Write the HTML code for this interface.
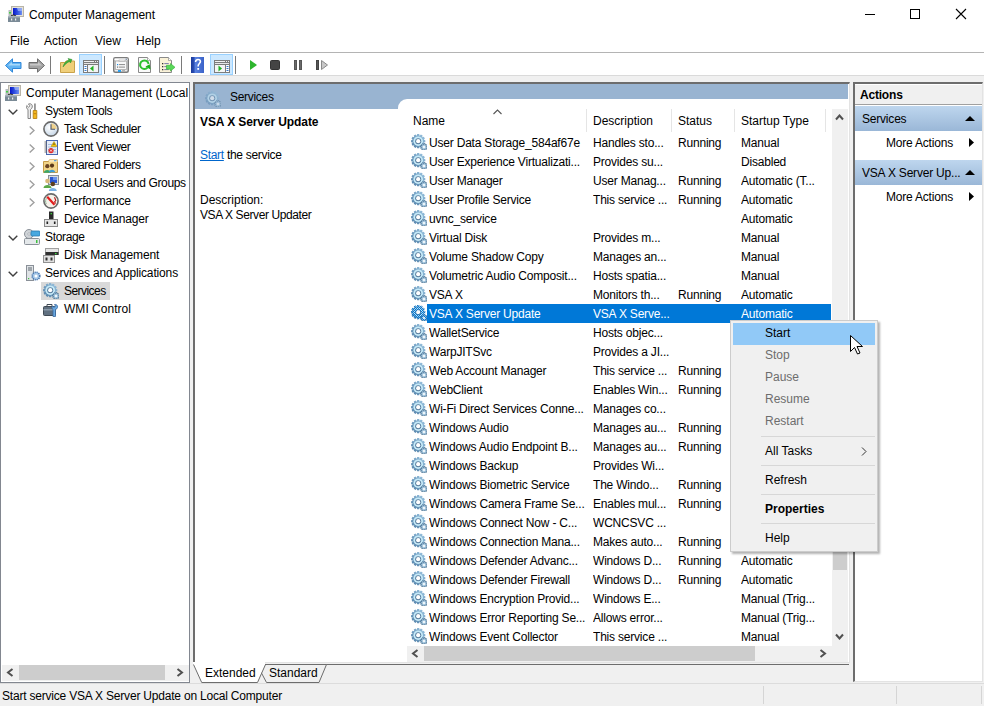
<!DOCTYPE html>
<html><head><meta charset="utf-8"><style>
*{margin:0;padding:0;box-sizing:border-box}
html,body{width:984px;height:706px;overflow:hidden;background:#f0f0f0;font-family:"Liberation Sans",sans-serif;font-size:12px;color:#000}
.a{position:absolute}
.t{position:absolute;white-space:nowrap;line-height:18px;font-size:12px}
#title{left:0;top:0;width:984px;height:52px;background:#fff}
#menuline{left:0;top:52px;width:984px;height:1px;background:#b4b4b4}
#toolbar{left:0;top:53px;width:984px;height:22px;background:#fff}
.sep{position:absolute;top:56px;width:1px;height:18px;background:#7a7a7a}
.tbh{position:absolute;top:54px;height:21px;background:#cce8ff;border:1px solid #99d1ff}
#tree{left:0;top:82px;width:190px;height:601px;background:#fff;border:1px solid #828790}
#center{left:193px;top:82px;width:657px;height:581px;background:#fff;border-top:2px solid #6d6d6d;border-left:2px solid #6d6d6d;border-right:1px solid #e3e3e3;border-bottom:1px solid #e3e3e3}
#hdrblue{left:195px;top:84px;width:653px;height:15px;background:#99b4d1}
#hdrblue2{left:195px;top:99px;width:203px;height:10px;background:#99b4d1}
#corner{left:397px;top:99px;width:10px;height:10px;background:#99b4d1}
#cornerw{left:398px;top:99px;width:20px;height:20px;background:#fff;border-top-left-radius:9px}
#actions{left:853px;top:82px;width:130px;height:600px;background:#fff;border-top:2px solid #6d6d6d;border-left:2px solid #6d6d6d;border-right:1px solid #e3e3e3;border-bottom:1px solid #e3e3e3}
#acttitle{left:855px;top:85px;width:127px;height:20px;background:#f0f0f0;border-bottom:1px solid #a0a0a0}
.agrad{position:absolute;left:855px;width:127px;height:25px;background:linear-gradient(#bed6ee,#9ab7d7)}
.row{position:absolute;left:408px;width:423px;height:19px}
.row .gi{position:absolute;left:3px;top:1px}
.row span{position:absolute;top:1px;line-height:18px;white-space:nowrap;overflow:hidden}
.row .c1{left:21px;width:170px}
.row .c2{left:185px;width:86px}
.row .c3{left:270px;width:60px}
.row .c4{left:333px;width:88px}
.row .hl{display:none}
.row.sel .hl{display:block;left:19px;top:0;width:404px;height:19px;background:#0078d7}
.row.sel span.c1,.row.sel span.c2,.row.sel span.c3,.row.sel span.c4{color:#fff}
#vscroll{left:832px;top:109px;width:16px;height:537px;background:#f0f0f0}
#vthumb{left:833px;top:520px;width:14px;height:50px;background:#cdcdcd}
#hscroll{left:407px;top:646px;width:425px;height:16px;background:#f0f0f0}
#hthumb{left:424px;top:646px;width:331px;height:15px;background:#cdcdcd}
#sbcorner{left:832px;top:646px;width:16px;height:16px;background:#f0f0f0}
#treehs{left:2px;top:665px;width:187px;height:16px;background:#f0f0f0}
#treehthumb{left:19px;top:665px;width:146px;height:15px;background:#cdcdcd}
#status{left:0;top:683px;width:984px;height:23px;background:#f0f0f0;border-top:1px solid #dcdcdc}
#menu{left:730px;top:320px;width:148px;height:232px;background:#f0f0f0;border:1px solid #cccccc;box-shadow:2px 2px 2px rgba(0,0,0,0.3)}
#mhl{left:733px;top:323px;width:142px;height:22px;background:#91c9f7}
.msep{position:absolute;left:761px;width:114px;height:1px;background:#d7d7d7}
.dis{color:#6d6d6d}
a.lk{color:#0066cc;text-decoration:underline}
.row span{letter-spacing:-0.2px}
.tr{letter-spacing:-0.2px}

</style></head><body>
<svg width="0" height="0" style="position:absolute">
 <defs>
  <linearGradient id="gg" x1="0" y1="0" x2="1" y2="1">
   <stop offset="0" stop-color="#dff0fb"/><stop offset="0.5" stop-color="#9cc3dc"/><stop offset="1" stop-color="#5a7e98"/>
  </linearGradient>
  <linearGradient id="gbody" x1="1" y1="0" x2="0" y2="1"><stop offset="0" stop-color="#9cc6e2"/><stop offset="1" stop-color="#4f7ea6"/></linearGradient>
  <symbol id="gear" viewBox="0 0 16 16">
   <path d="M12.73 5.82 L14.33 6.17 L14.33 8.23 L12.73 8.58 L12.68 8.77 L13.89 9.87 L12.85 11.66 L11.30 11.16 L11.16 11.30 L11.66 12.85 L9.87 13.89 L8.77 12.68 L8.58 12.73 L8.23 14.33 L6.17 14.33 L5.82 12.73 L5.63 12.68 L4.53 13.89 L2.74 12.85 L3.24 11.30 L3.10 11.16 L1.55 11.66 L0.51 9.87 L1.72 8.77 L1.67 8.58 L0.07 8.23 L0.07 6.17 L1.67 5.82 L1.72 5.63 L0.51 4.53 L1.55 2.74 L3.10 3.24 L3.24 3.10 L2.74 1.55 L4.53 0.51 L5.63 1.72 L5.82 1.67 L6.17 0.07 L8.23 0.07 L8.58 1.67 L8.77 1.72 L9.87 0.51 L11.66 1.55 L11.16 3.10 L11.30 3.24 L12.85 2.74 L13.89 4.53 L12.68 5.63z" fill="url(#gbody)"/>
   <circle cx="7.2" cy="7.2" r="4.8" fill="#c6eaf8"/>
   <circle cx="7.2" cy="7.2" r="3.0" fill="#557a9c"/>
   <circle cx="7.2" cy="7.2" r="2.1" fill="#fff"/>
   <path d="M15.47 12.59 L16.40 13.01 L16.14 14.31 L15.11 14.33 L15.03 14.46 L15.40 15.41 L14.29 16.15 L13.55 15.44 L13.41 15.47 L12.99 16.40 L11.69 16.14 L11.67 15.11 L11.54 15.03 L10.59 15.40 L9.85 14.29 L10.56 13.55 L10.53 13.41 L9.60 12.99 L9.86 11.69 L10.89 11.67 L10.97 11.54 L10.60 10.59 L11.71 9.85 L12.45 10.56 L12.59 10.53 L13.01 9.60 L14.31 9.86 L14.33 10.89 L14.46 10.97 L15.41 10.60 L16.15 11.71 L15.44 12.45z" fill="#a9cbe2" stroke="#3f6586" stroke-width="0.7"/>
   <circle cx="13" cy="13" r="1.1" fill="#fff"/>
  </symbol>
  <pattern id="dith" width="2" height="2" patternUnits="userSpaceOnUse"><rect width="1" height="1" fill="#0078d7"/><rect x="1" y="1" width="1" height="1" fill="#0078d7"/></pattern>
  <mask id="gmask" maskUnits="userSpaceOnUse" x="0" y="0" width="16" height="16"><path d="M12.73 5.82 L14.33 6.17 L14.33 8.23 L12.73 8.58 L12.68 8.77 L13.89 9.87 L12.85 11.66 L11.30 11.16 L11.16 11.30 L11.66 12.85 L9.87 13.89 L8.77 12.68 L8.58 12.73 L8.23 14.33 L6.17 14.33 L5.82 12.73 L5.63 12.68 L4.53 13.89 L2.74 12.85 L3.24 11.30 L3.10 11.16 L1.55 11.66 L0.51 9.87 L1.72 8.77 L1.67 8.58 L0.07 8.23 L0.07 6.17 L1.67 5.82 L1.72 5.63 L0.51 4.53 L1.55 2.74 L3.10 3.24 L3.24 3.10 L2.74 1.55 L4.53 0.51 L5.63 1.72 L5.82 1.67 L6.17 0.07 L8.23 0.07 L8.58 1.67 L8.77 1.72 L9.87 0.51 L11.66 1.55 L11.16 3.10 L11.30 3.24 L12.85 2.74 L13.89 4.53 L12.68 5.63z" fill="#fff"/><circle cx="7.2" cy="7.2" r="2.1" fill="#000"/><path d="M15.47 12.59 L16.40 13.01 L16.14 14.31 L15.11 14.33 L15.03 14.46 L15.40 15.41 L14.29 16.15 L13.55 15.44 L13.41 15.47 L12.99 16.40 L11.69 16.14 L11.67 15.11 L11.54 15.03 L10.59 15.40 L9.85 14.29 L10.56 13.55 L10.53 13.41 L9.60 12.99 L9.86 11.69 L10.89 11.67 L10.97 11.54 L10.60 10.59 L11.71 9.85 L12.45 10.56 L12.59 10.53 L13.01 9.60 L14.31 9.86 L14.33 10.89 L14.46 10.97 L15.41 10.60 L16.15 11.71 L15.44 12.45z" fill="#fff"/><circle cx="13" cy="13" r="1.1" fill="#000"/></mask>
  <symbol id="gearS" viewBox="0 0 16 16">
   <use href="#gear"/>
   <rect width="16" height="16" fill="url(#dith)" mask="url(#gmask)"/>
  </symbol>
 </defs>
</svg>

<div id="title" class="a"></div>
<!-- title icon -->
<svg width="0" height="0" style="position:absolute"><defs>
 <linearGradient id="scr" x1="0" y1="0" x2="1" y2="0"><stop offset="0" stop-color="#0818c8"/><stop offset="0.5" stop-color="#3050e0"/><stop offset="1" stop-color="#7090f0"/></linearGradient>
 <symbol id="compicon" viewBox="0 0 16 16">
  <rect x="3.5" y="0.5" width="12" height="10" fill="#e4e2d8" stroke="#b8b4a8"/>
  <rect x="5" y="2" width="9" height="7" fill="url(#scr)"/>
  <path d="M9 2h5v3H10z" fill="#9ab0f4" opacity="0.8"/>
  <rect x="0.5" y="4" width="3" height="6" fill="#b8bcc0"/>
  <rect x="1" y="6" width="2" height="1.5" fill="#40d040"/>
  <path d="M3 10.5C4 8.5 7 8.5 8 10.5" fill="none" stroke="#202020" stroke-width="1.2"/>
  <rect x="0" y="10" width="12" height="6" fill="#7a8a96"/>
  <rect x="0" y="10" width="12" height="1.5" fill="#a8b4bc"/>
  <rect x="3" y="12.5" width="1.2" height="2" fill="#f0f0f0"/>
  <rect x="7" y="12.5" width="1.2" height="2" fill="#f0f0f0"/>
 </symbol>
</defs></svg>
<svg class="a" style="left:8px;top:6px" width="16" height="16"><use href="#compicon"/></svg>
<div class="t" style="left:29px;top:6px">Computer Management</div>
<!-- window controls -->
<div class="a" style="left:865px;top:14px;width:10px;height:1px;background:#000"></div>
<div class="a" style="left:910px;top:9px;width:10px;height:10px;border:1px solid #000"></div>
<svg class="a" style="left:955px;top:8px" width="12" height="12" viewBox="0 0 12 12"><path d="M1 1L11 11M11 1L1 11" stroke="#000" stroke-width="1.1"/></svg>

<div class="t" style="left:10px;top:32px">File</div>
<div class="t" style="left:44px;top:32px">Action</div>
<div class="t" style="left:95px;top:32px">View</div>
<div class="t" style="left:136px;top:32px">Help</div>
<div id="menuline" class="a"></div>
<div id="toolbar" class="a"></div>
<div class="a" style="left:0;top:75px;width:984px;height:1px;background:#dadada"></div>

<!-- toolbar icons -->
<svg class="a" style="left:5px;top:58px" width="17" height="15" viewBox="0 0 17 15"><path d="M0.5 7.5L7.5 0.8V4.5H16V10.5H7.5V14.2z" fill="#62b4f2" stroke="#2f86d8"/><path d="M3 7.5L7 4V6H15V7.5z" fill="#a8d8fa"/></svg>
<svg class="a" style="left:28px;top:58px" width="17" height="15" viewBox="0 0 17 15"><path d="M16.5 7.5L9.5 0.8V4.5H1V10.5H9.5V14.2z" fill="#a4a4a4" stroke="#6e6e6e"/><path d="M2 6H10V4L14 7.5H2z" fill="#c8c8c8"/></svg>
<div class="sep" style="left:50px"></div>
<svg class="a" style="left:60px;top:58px" width="15" height="15" viewBox="0 0 15 15"><path d="M0.5 4.5H5l1-1.5h8.5v11.5H0.5z" fill="#f0cf7a" stroke="#c9a24a"/><path d="M3 9C4 5 6 3 9 2L8 0.5 12 1.5 10.5 5 9.5 3.5C7 4.5 5 6.5 3 9z" fill="#3cb43c" stroke="#2a8a2a" stroke-width="0.5"/></svg>
<div class="tbh" style="left:79px;width:23px"></div>
<svg class="a" style="left:83px;top:60px" width="16" height="13" viewBox="0 0 16 13">
 <rect x="0" y="0" width="16" height="13" fill="#7c7c7c"/>
 <rect x="1" y="1" width="10" height="1" fill="#f0f0f0"/><rect x="12" y="1" width="1" height="1" fill="#f0f0f0"/><rect x="14" y="1" width="1" height="1" fill="#f0f0f0"/>
 <rect x="1" y="3" width="14" height="1" fill="#e6e6e6"/>
 <rect x="1" y="5" width="3" height="7" fill="#fff"/>
 <rect x="5" y="5" width="10" height="7" fill="#f4f4f4"/>
 <rect x="1.5" y="6" width="2" height="1" fill="#3a78c8"/><rect x="1.5" y="8" width="2" height="1" fill="#3a78c8"/><rect x="1.5" y="10" width="2" height="1" fill="#3a78c8"/>
 <path d="M10.5 5.5L7 8.5 10.5 11.5z" fill="#22b022"/>
</svg>
<div class="sep" style="left:104px"></div>
<svg class="a" style="left:113px;top:57px" width="16" height="16" viewBox="0 0 16 16">
 <rect x="0.75" y="0.75" width="14.5" height="14.5" rx="1.5" fill="#ececec" stroke="#7c7c7c" stroke-width="1.5"/>
 <rect x="1.5" y="1.5" width="13" height="1.5" fill="#fff"/>
 <rect x="12.5" y="1.5" width="1.5" height="1.5" fill="#8a9ab0"/>
 <rect x="2.5" y="4" width="11" height="8.5" fill="#f8f8f8" stroke="#a8a8a8" stroke-width="0.8"/>
 <rect x="6" y="3" width="6" height="1.5" fill="#f8f8f8" stroke="#a8a8a8" stroke-width="0.6"/>
 <rect x="4" y="7" width="1.2" height="1.2" fill="#1e90e8"/>
 <rect x="4" y="9.5" width="1.2" height="1.2" fill="#707070"/>
 <path d="M6 7.6h6M6 10.1h6" stroke="#8a8a8a" stroke-width="1"/>
 <rect x="5" y="13" width="3" height="2" fill="#2aa0f0"/>
 <rect x="9" y="13" width="3" height="2" fill="#b0b0b0"/>
</svg>
<svg class="a" style="left:138px;top:57px" width="14" height="16" viewBox="0 0 14 16">
 <path d="M0.5 0.5H9.5L12.5 3.5V15.5H0.5z" fill="#fafafa" stroke="#8a8a8a"/>
 <path d="M9.5 0.5V3.5H12.5" fill="#fff" stroke="#8a8a8a" stroke-width="0.7"/>
 <path d="M9.6 10.6A4.3 4.3 0 1 1 10.6 7" fill="none" stroke="#30c030" stroke-width="2"/>
 <path d="M7.5 9.5L12.5 12.5 11.8 7.2z" fill="#18b018"/>
</svg>
<svg class="a" style="left:159px;top:57px" width="17" height="16" viewBox="0 0 17 16">
 <path d="M0.5 0.5H9.5L12.5 3.5V15.5H0.5z" fill="#faf2d8" stroke="#8a8a8a"/>
 <path d="M9.5 0.5V3.5H12.5" fill="#fff" stroke="#8a8a8a" stroke-width="0.7"/>
 <rect x="3" y="6" width="1.3" height="1.3" fill="#333"/>
 <rect x="3" y="9" width="1.3" height="1.3" fill="#333"/>
 <rect x="3" y="12" width="1.3" height="1.3" fill="#333"/>
 <path d="M5.3 6.6h4.5M5.3 9.6h4.5M5.3 12.6h4.5" stroke="#7878a8" stroke-width="1"/>
 <path d="M7.5 8.3H11.5V6.5L16 10.3 11.5 14V12.2H7.5z" fill="#5ad85a" stroke="#30b030" stroke-width="0.6"/>
</svg>
<div class="sep" style="left:181px"></div>
<svg class="a" style="left:191px;top:57px" width="13" height="16" viewBox="0 0 13 16"><defs><linearGradient id="hg" x1="0" y1="0" x2="1" y2="0"><stop offset="0" stop-color="#1a3a9a"/><stop offset="0.25" stop-color="#2c50b8"/><stop offset="0.3" stop-color="#5a82e0"/><stop offset="1" stop-color="#3a62c8"/></linearGradient></defs><rect x="0" y="0" width="13" height="16" fill="url(#hg)"/><path d="M4.6 5C4.6 3.2 5.8 2.5 7 2.5 8.5 2.5 9.4 3.4 9.4 4.6 9.4 6.4 7.2 6.6 7.2 8.8V9.5" fill="none" stroke="#fff" stroke-width="1.6"/><rect x="6.3" y="11" width="1.8" height="1.8" fill="#fff"/></svg>
<div class="tbh" style="left:210px;width:23px"></div>
<svg class="a" style="left:214px;top:60px" width="16" height="13" viewBox="0 0 16 13">
 <rect x="0" y="0" width="16" height="13" fill="#7c7c7c"/>
 <rect x="1" y="1" width="10" height="1" fill="#f0f0f0"/><rect x="12" y="1" width="1" height="1" fill="#f0f0f0"/><rect x="14" y="1" width="1" height="1" fill="#f0f0f0"/>
 <rect x="1" y="3" width="14" height="1" fill="#e6e6e6"/>
 <rect x="1" y="5" width="10" height="7" fill="#f4f4f4"/>
 <rect x="12" y="5" width="3" height="7" fill="#fff"/>
 <rect x="12.5" y="6" width="2" height="1" fill="#3a78c8"/><rect x="12.5" y="8" width="2" height="1" fill="#3a78c8"/><rect x="12.5" y="10" width="2" height="1" fill="#3a78c8"/>
 <path d="M4.5 5.5L8 8.5 4.5 11.5z" fill="#22b022"/>
</svg>
<div class="sep" style="left:235px"></div>
<svg class="a" style="left:250px;top:60px" width="7" height="10" viewBox="0 0 7 10"><path d="M0 0L7 5 0 10z" fill="#2db52d"/></svg>
<div class="a" style="left:270px;top:60px;width:10px;height:10px;background:#444;border-radius:1.5px;border:1px solid #333"></div>
<div class="a" style="left:294px;top:60px;width:3px;height:10px;background:#6a6a6a;border:1px solid #555"></div>
<div class="a" style="left:299px;top:60px;width:3px;height:10px;background:#6a6a6a;border:1px solid #555"></div>
<div class="a" style="left:316px;top:60px;width:3px;height:10px;background:#555;border:1px solid #444"></div>
<svg class="a" style="left:321px;top:60px" width="7" height="10" viewBox="0 0 7 10"><path d="M0.5 0.5L6.5 5 0.5 9.5z" fill="#c8c8c8" stroke="#8a8a8a"/></svg>

<!-- tree pane -->
<div id="tree" class="a"></div>
<div class="a" style="left:0;top:0;width:189px;height:665px;overflow:hidden">
<div class="a" style="left:41px;top:282px;width:69px;height:18px;background:#d9d9d9"></div>
<div class="t" style="left:26px;top:84px;letter-spacing:0px">Computer Management (Local</div>
<div class="t" style="left:45px;top:102px;letter-spacing:-0.32px">System Tools</div>
<div class="t" style="left:64px;top:120px;letter-spacing:-0.39px">Task Scheduler</div>
<div class="t" style="left:64px;top:138px;letter-spacing:-0.33px">Event Viewer</div>
<div class="t" style="left:64px;top:156px;letter-spacing:-0.39px">Shared Folders</div>
<div class="t" style="left:64px;top:174px;letter-spacing:-0.35px">Local Users and Groups</div>
<div class="t" style="left:64px;top:192px;letter-spacing:-0.17px">Performance</div>
<div class="t" style="left:64px;top:210px;letter-spacing:-0.21px">Device Manager</div>
<div class="t" style="left:45px;top:228px;letter-spacing:-0.34px">Storage</div>
<div class="t" style="left:64px;top:246px;letter-spacing:-0.09px">Disk Management</div>
<div class="t" style="left:45px;top:264px;letter-spacing:-0.15px">Services and Applications</div>
<div class="t" style="left:64px;top:282px;letter-spacing:-0.55px">Services</div>
<div class="t" style="left:64px;top:300px;letter-spacing:0.03px">WMI Control</div>

<!-- chevrons -->
<svg class="a" style="left:8px;top:109px" width="10" height="6" viewBox="0 0 10 6"><path d="M0.7 0.7L5 5 9.3 0.7" fill="none" stroke="#404040" stroke-width="1.4"/></svg>
<svg class="a" style="left:8px;top:235px" width="10" height="6" viewBox="0 0 10 6"><path d="M0.7 0.7L5 5 9.3 0.7" fill="none" stroke="#404040" stroke-width="1.4"/></svg>
<svg class="a" style="left:8px;top:271px" width="10" height="6" viewBox="0 0 10 6"><path d="M0.7 0.7L5 5 9.3 0.7" fill="none" stroke="#404040" stroke-width="1.4"/></svg>
<svg class="a" style="left:29px;top:126px" width="6" height="9" viewBox="0 0 6 9"><path d="M0.7 0.5L5 4.5 0.7 8.5" fill="none" stroke="#a0a0a0" stroke-width="1.4"/></svg>
<svg class="a" style="left:29px;top:144px" width="6" height="9" viewBox="0 0 6 9"><path d="M0.7 0.5L5 4.5 0.7 8.5" fill="none" stroke="#a0a0a0" stroke-width="1.4"/></svg>
<svg class="a" style="left:29px;top:162px" width="6" height="9" viewBox="0 0 6 9"><path d="M0.7 0.5L5 4.5 0.7 8.5" fill="none" stroke="#a0a0a0" stroke-width="1.4"/></svg>
<svg class="a" style="left:29px;top:180px" width="6" height="9" viewBox="0 0 6 9"><path d="M0.7 0.5L5 4.5 0.7 8.5" fill="none" stroke="#a0a0a0" stroke-width="1.4"/></svg>
<svg class="a" style="left:29px;top:198px" width="6" height="9" viewBox="0 0 6 9"><path d="M0.7 0.5L5 4.5 0.7 8.5" fill="none" stroke="#a0a0a0" stroke-width="1.4"/></svg>
<!-- computer -->
<svg class="a" style="left:5px;top:85px" width="16" height="16"><use href="#compicon"/></svg>
<!-- tools -->
<svg class="a" style="left:26px;top:103px" width="12" height="16" viewBox="0 0 12 16">
 <path d="M2 15.5V6.5C0.5 5.8 0 4 0.8 2.5L2.5 4.2 4 2.8 2.4 1C4 0.2 6 1 6.3 2.8 6.5 4.6 5.6 5.8 4.5 6.5V15.5z" fill="#eaeaea" stroke="#7a7a7a" stroke-width="0.9"/>
 <rect x="8.3" y="0.5" width="1.3" height="7" fill="#6a6a6a"/>
 <path d="M7.2 7.5h3.6v8h-3.6z" fill="#f2b51c" stroke="#b07a08" stroke-width="0.8"/>
 <rect x="7.6" y="10" width="2.8" height="1.2" fill="#c88a10"/>
</svg>
<!-- clock -->
<svg class="a" style="left:43px;top:121px" width="16" height="16" viewBox="0 0 16 16">
 <defs><radialGradient id="cf" cx="0.4" cy="0.4" r="0.6"><stop offset="0" stop-color="#ffffff"/><stop offset="1" stop-color="#c8d8e8"/></radialGradient></defs>
 <circle cx="8" cy="8" r="7.1" fill="url(#cf)" stroke="#6a6a6a" stroke-width="1.6"/>
 <path d="M8 8V2.3A5.7 5.7 0 0 1 13.7 8z" fill="#f0d28c"/>
 <path d="M8 3.2V8.3H12" fill="none" stroke="#4a5468" stroke-width="1.1"/>
</svg>
<!-- event viewer -->
<svg class="a" style="left:44px;top:140px" width="14" height="15" viewBox="0 0 14 15">
 <rect x="2.5" y="0.5" width="11" height="14" fill="#e4ecf8" stroke="#4a68b0"/>
 <path d="M0.5 2h2.5M0.5 4h2.5M0.5 6h2.5M0.5 8h2.5M0.5 10h2.5M0.5 12h2.5" stroke="#606060" stroke-width="0.9"/>
 <path d="M4 4.5h8M4 7h8M4 9.5h8M4 12h8" stroke="#9ab0d8" stroke-width="0.8"/>
 <path d="M10 1.5L13 6.5H7z" fill="#f5c400" stroke="#a88400" stroke-width="0.5"/>
 <path d="M10 3.3V5" stroke="#333" stroke-width="0.9"/>
 <circle cx="7" cy="10.6" r="2.6" fill="#e02828"/>
 <path d="M6 9.6l2 2M8 9.6l-2 2" stroke="#fff" stroke-width="0.8"/>
</svg>
<!-- shared folders -->
<svg class="a" style="left:43px;top:159px" width="15" height="14" viewBox="0 0 15 14">
 <path d="M0.5 2.5H5.5L6.5 0.8H14.5V13.5H0.5z" fill="#f2d488" stroke="#c49a48"/>
 <path d="M6.5 0.8H14.5V3H6z" fill="#fae8b8"/>
 <rect x="11" y="1.2" width="2.5" height="1" fill="#3a8ad8"/>
 <circle cx="4.3" cy="7.2" r="2.1" fill="#6a4424"/>
 <path d="M0.8 13.8C0.8 10.2 7.8 10.2 7.8 13.8z" fill="#3aa868"/>
 <circle cx="9" cy="6.6" r="2.1" fill="#5a3818"/>
 <path d="M5.8 13.2C5.8 9.8 12.2 9.8 12.2 13.2z" fill="#3a9ed8"/>
</svg>
<!-- local users -->
<svg class="a" style="left:43px;top:175px" width="16" height="16" viewBox="0 0 16 16">
 <rect x="5.5" y="0.5" width="10" height="9" fill="#d6dade" stroke="#8a9098"/>
 <rect x="7" y="2" width="7" height="6" fill="#2a56d0"/>
 <rect x="10" y="2" width="4" height="3" fill="#6a94ec"/>
 <circle cx="4.5" cy="6" r="2.3" fill="#d8b878"/>
 <path d="M0.5 13C0.5 9 8.5 9 8.5 13z" fill="#5aa848"/>
 <circle cx="9.8" cy="9" r="2.3" fill="#5e3e1e"/>
 <path d="M5.8 16C5.8 12 13.8 12 13.8 16z" fill="#7ab2e4"/>
</svg>
<!-- performance -->
<svg class="a" style="left:43px;top:193px" width="16" height="16" viewBox="0 0 16 16">
 <circle cx="8" cy="8" r="7.1" fill="#f6f2ea" stroke="#6a6a6a" stroke-width="1.6"/>
 <path d="M3.2 10.5A5 5 0 0 1 3.6 5.2" fill="none" stroke="#3a8a5a" stroke-width="1" stroke-dasharray="1 1"/>
 <path d="M11.5 4.2L12.8 7.5 11.6 8.8 12.6 10.6" fill="none" stroke="#b81818" stroke-width="1.1"/>
 <path d="M4.2 3.8L11.5 11.8" stroke="#e01e1e" stroke-width="2.2"/>
</svg>
<!-- device manager -->
<svg class="a" style="left:44px;top:211px" width="14" height="16" viewBox="0 0 14 16">
 <rect x="5" y="0.5" width="4.5" height="8" fill="#2a2a2a"/>
 <rect x="6.6" y="2" width="1.3" height="1.3" fill="#40e040"/>
 <rect x="0.5" y="8.5" width="13" height="7" fill="#e6e6e6" stroke="#8a8a8a"/>
 <rect x="2.5" y="10.5" width="1.6" height="2.5" fill="#222"/>
 <rect x="9.9" y="10.5" width="1.6" height="2.5" fill="#222"/>
</svg>
<!-- storage -->
<svg class="a" style="left:24px;top:229px" width="16" height="16" viewBox="0 0 16 16">
 <circle cx="5" cy="5" r="4.5" fill="#d0d4d8" stroke="#8a9098"/>
 <circle cx="5" cy="5" r="1.2" fill="#fff" stroke="#8a9098" stroke-width="0.6"/>
 <rect x="7" y="2" width="9" height="5" rx="1" fill="#48a8e0" stroke="#2878b0" stroke-width="0.8"/>
 <rect x="0.5" y="9.5" width="15" height="6" rx="1" fill="#e4e8ea" stroke="#8a9098"/>
 <rect x="12" y="11" width="1.5" height="3" fill="#40c040"/>
</svg>
<!-- disk mgmt -->
<svg class="a" style="left:43px;top:248px" width="16" height="15" viewBox="0 0 16 15">
 <rect x="2.5" y="0.5" width="13" height="6" fill="#e6e6e6" stroke="#a0a0a0"/>
 <rect x="2.5" y="4" width="13" height="3" fill="#303030"/>
 <rect x="12" y="5" width="1.5" height="1.2" fill="#40e040"/>
 <rect x="0.5" y="7.5" width="11" height="7" fill="#e0e0e0" stroke="#909090"/>
 <rect x="2.5" y="9.5" width="2" height="3" fill="#303030"/>
 <rect x="7.5" y="9.5" width="2" height="3" fill="#303030"/>
</svg>
<!-- services and apps -->
<svg class="a" style="left:26px;top:265px" width="15" height="16" viewBox="0 0 15 16">
 <rect x="0.5" y="0.5" width="7" height="15" fill="#dfe3e6" stroke="#8a9098"/>
 <path d="M2 3h4M2 5h4" stroke="#606870"/>
 <rect x="2" y="13" width="1.2" height="1.2" fill="#40c040"/>
 <circle cx="10" cy="11" r="3.8" fill="#a8c8e8" stroke="#4a78b0" stroke-width="1.6" stroke-dasharray="1.2 0.8"/>
 <circle cx="10" cy="11" r="1.5" fill="#fff"/>
</svg>
<!-- services gear -->
<svg class="a" style="left:43px;top:283px" width="16" height="16"><use href="#gear"/></svg>
<!-- wmi -->
<svg class="a" style="left:43px;top:301px" width="16" height="16" viewBox="0 0 16 16">
 <rect x="0.5" y="5.5" width="12" height="9" rx="1" fill="#607080" stroke="#404a54"/>
 <rect x="0.5" y="8" width="12" height="1.5" fill="#8a9aaa"/>
 <path d="M4 5.5V3.5h5v2" fill="none" stroke="#404a54"/>
 <path d="M10 15.5V8.5C9 8 8.5 6.5 9.5 5L11 6.5 12.5 5 11.5 3.5C13.5 3 15 4.5 14.5 6.5 14.2 7.5 13.5 8.3 12.5 8.5V15.5z" fill="#6aa8e0" stroke="#3a6aa0" stroke-width="0.8"/>
</svg>

</div>
<div id="treehs" class="a"></div>
<div id="treehthumb" class="a"></div>
<svg class="a" style="left:6px;top:668px" width="8" height="9" viewBox="0 0 8 9"><path d="M6.5 1L2 4.5 6.5 8" fill="none" stroke="#505050" stroke-width="2"/></svg>
<svg class="a" style="left:176px;top:668px" width="8" height="9" viewBox="0 0 8 9"><path d="M1.5 1L6 4.5 1.5 8" fill="none" stroke="#505050" stroke-width="2"/></svg>

<!-- center pane -->
<div id="center" class="a"></div>
<div id="hdrblue" class="a"></div>
<div id="hdrblue2" class="a"></div>
<div id="corner" class="a"></div>
<div id="cornerw" class="a"></div>
<svg class="a" style="left:205px;top:91px" width="16" height="16" style="opacity:0.6"><use href="#gear" opacity="0.55"/></svg>
<div class="t" style="left:230px;top:88px;letter-spacing:-0.3px">Services</div>
<div class="t" style="left:200px;top:113px;font-weight:bold;letter-spacing:-0.1px">VSA X Server Update</div>
<div class="t" style="left:200px;top:146px;letter-spacing:-0.3px"><a class="lk">Start</a> the service</div>
<div class="t" style="left:200px;top:191px">Description:</div>
<div class="t" style="left:200px;top:206px;letter-spacing:-0.4px">VSA X Server Updater</div>

<div class="t" style="left:413px;top:112px">Name</div>
<div class="t" style="left:593px;top:112px">Description</div>
<div class="t" style="left:678px;top:112px">Status</div>
<div class="t" style="left:741px;top:112px">Startup Type</div>
<svg class="a" style="left:493px;top:109px" width="9" height="6" viewBox="0 0 9 6"><path d="M0.5 5L4.5 1 8.5 5" fill="none" stroke="#555" stroke-width="1.1"/></svg>
<div class="a" style="left:586px;top:109px;width:1px;height:23px;background:#e5e5e5"></div>
<div class="a" style="left:671px;top:109px;width:1px;height:23px;background:#e5e5e5"></div>
<div class="a" style="left:734px;top:109px;width:1px;height:23px;background:#e5e5e5"></div>
<div class="a" style="left:825px;top:109px;width:1px;height:23px;background:#e5e5e5"></div>

<div class="row" style="top:133px"><svg class="gi" width="16" height="16"><use href="#gear"/></svg><span class="hl"></span><span class="c1">User Data Storage_584af67e</span><span class="c2">Handles sto...</span><span class="c3">Running</span><span class="c4">Manual</span></div>
<div class="row" style="top:152px"><svg class="gi" width="16" height="16"><use href="#gear"/></svg><span class="hl"></span><span class="c1">User Experience Virtualizati...</span><span class="c2">Provides su...</span><span class="c3"></span><span class="c4">Disabled</span></div>
<div class="row" style="top:171px"><svg class="gi" width="16" height="16"><use href="#gear"/></svg><span class="hl"></span><span class="c1">User Manager</span><span class="c2">User Manag...</span><span class="c3">Running</span><span class="c4">Automatic (T...</span></div>
<div class="row" style="top:190px"><svg class="gi" width="16" height="16"><use href="#gear"/></svg><span class="hl"></span><span class="c1">User Profile Service</span><span class="c2">This service ...</span><span class="c3">Running</span><span class="c4">Automatic</span></div>
<div class="row" style="top:209px"><svg class="gi" width="16" height="16"><use href="#gear"/></svg><span class="hl"></span><span class="c1">uvnc_service</span><span class="c2"></span><span class="c3"></span><span class="c4">Automatic</span></div>
<div class="row" style="top:228px"><svg class="gi" width="16" height="16"><use href="#gear"/></svg><span class="hl"></span><span class="c1">Virtual Disk</span><span class="c2">Provides m...</span><span class="c3"></span><span class="c4">Manual</span></div>
<div class="row" style="top:247px"><svg class="gi" width="16" height="16"><use href="#gear"/></svg><span class="hl"></span><span class="c1">Volume Shadow Copy</span><span class="c2">Manages an...</span><span class="c3"></span><span class="c4">Manual</span></div>
<div class="row" style="top:266px"><svg class="gi" width="16" height="16"><use href="#gear"/></svg><span class="hl"></span><span class="c1">Volumetric Audio Composit...</span><span class="c2">Hosts spatia...</span><span class="c3"></span><span class="c4">Manual</span></div>
<div class="row" style="top:285px"><svg class="gi" width="16" height="16"><use href="#gear"/></svg><span class="hl"></span><span class="c1">VSA X</span><span class="c2">Monitors th...</span><span class="c3">Running</span><span class="c4">Automatic</span></div>
<div class="row sel" style="top:304px"><svg class="gi" width="16" height="16"><use href="#gearS"/></svg><span class="hl"></span><span class="c1">VSA X Server Update</span><span class="c2">VSA X Serve...</span><span class="c3"></span><span class="c4">Automatic</span></div>
<div class="row" style="top:323px"><svg class="gi" width="16" height="16"><use href="#gear"/></svg><span class="hl"></span><span class="c1">WalletService</span><span class="c2">Hosts objec...</span><span class="c3"></span><span class="c4"></span></div>
<div class="row" style="top:342px"><svg class="gi" width="16" height="16"><use href="#gear"/></svg><span class="hl"></span><span class="c1">WarpJITSvc</span><span class="c2">Provides a JI...</span><span class="c3"></span><span class="c4"></span></div>
<div class="row" style="top:361px"><svg class="gi" width="16" height="16"><use href="#gear"/></svg><span class="hl"></span><span class="c1">Web Account Manager</span><span class="c2">This service ...</span><span class="c3">Running</span><span class="c4"></span></div>
<div class="row" style="top:380px"><svg class="gi" width="16" height="16"><use href="#gear"/></svg><span class="hl"></span><span class="c1">WebClient</span><span class="c2">Enables Win...</span><span class="c3">Running</span><span class="c4"></span></div>
<div class="row" style="top:399px"><svg class="gi" width="16" height="16"><use href="#gear"/></svg><span class="hl"></span><span class="c1">Wi-Fi Direct Services Conne...</span><span class="c2">Manages co...</span><span class="c3"></span><span class="c4"></span></div>
<div class="row" style="top:418px"><svg class="gi" width="16" height="16"><use href="#gear"/></svg><span class="hl"></span><span class="c1">Windows Audio</span><span class="c2">Manages au...</span><span class="c3">Running</span><span class="c4"></span></div>
<div class="row" style="top:437px"><svg class="gi" width="16" height="16"><use href="#gear"/></svg><span class="hl"></span><span class="c1">Windows Audio Endpoint B...</span><span class="c2">Manages au...</span><span class="c3">Running</span><span class="c4"></span></div>
<div class="row" style="top:456px"><svg class="gi" width="16" height="16"><use href="#gear"/></svg><span class="hl"></span><span class="c1">Windows Backup</span><span class="c2">Provides Wi...</span><span class="c3"></span><span class="c4"></span></div>
<div class="row" style="top:475px"><svg class="gi" width="16" height="16"><use href="#gear"/></svg><span class="hl"></span><span class="c1">Windows Biometric Service</span><span class="c2">The Windo...</span><span class="c3">Running</span><span class="c4"></span></div>
<div class="row" style="top:494px"><svg class="gi" width="16" height="16"><use href="#gear"/></svg><span class="hl"></span><span class="c1">Windows Camera Frame Se...</span><span class="c2">Enables mul...</span><span class="c3">Running</span><span class="c4"></span></div>
<div class="row" style="top:513px"><svg class="gi" width="16" height="16"><use href="#gear"/></svg><span class="hl"></span><span class="c1">Windows Connect Now - C...</span><span class="c2">WCNCSVC ...</span><span class="c3"></span><span class="c4"></span></div>
<div class="row" style="top:532px"><svg class="gi" width="16" height="16"><use href="#gear"/></svg><span class="hl"></span><span class="c1">Windows Connection Mana...</span><span class="c2">Makes auto...</span><span class="c3">Running</span><span class="c4"></span></div>
<div class="row" style="top:551px"><svg class="gi" width="16" height="16"><use href="#gear"/></svg><span class="hl"></span><span class="c1">Windows Defender Advanc...</span><span class="c2">Windows D...</span><span class="c3">Running</span><span class="c4">Automatic</span></div>
<div class="row" style="top:570px"><svg class="gi" width="16" height="16"><use href="#gear"/></svg><span class="hl"></span><span class="c1">Windows Defender Firewall</span><span class="c2">Windows D...</span><span class="c3">Running</span><span class="c4">Automatic</span></div>
<div class="row" style="top:589px"><svg class="gi" width="16" height="16"><use href="#gear"/></svg><span class="hl"></span><span class="c1">Windows Encryption Provid...</span><span class="c2">Windows E...</span><span class="c3"></span><span class="c4">Manual (Trig...</span></div>
<div class="row" style="top:608px"><svg class="gi" width="16" height="16"><use href="#gear"/></svg><span class="hl"></span><span class="c1">Windows Error Reporting Se...</span><span class="c2">Allows error...</span><span class="c3"></span><span class="c4">Manual (Trig...</span></div>
<div class="row" style="top:627px"><svg class="gi" width="16" height="16"><use href="#gear"/></svg><span class="hl"></span><span class="c1">Windows Event Collector</span><span class="c2">This service ...</span><span class="c3"></span><span class="c4">Manual</span></div>

<div id="vscroll" class="a"></div>
<div id="vthumb" class="a"></div>
<svg class="a" style="left:835px;top:114px" width="9" height="7" viewBox="0 0 9 7"><path d="M1 5.5L4.5 1.5 8 5.5" fill="none" stroke="#505050" stroke-width="2"/></svg>
<svg class="a" style="left:835px;top:633px" width="9" height="7" viewBox="0 0 9 7"><path d="M1 1.5L4.5 5.5 8 1.5" fill="none" stroke="#505050" stroke-width="2"/></svg>
<div id="hscroll" class="a"></div>
<div id="hthumb" class="a"></div>
<div id="sbcorner" class="a"></div>
<svg class="a" style="left:411px;top:649px" width="8" height="9" viewBox="0 0 8 9"><path d="M6.5 1L2 4.5 6.5 8" fill="none" stroke="#505050" stroke-width="2"/></svg>
<svg class="a" style="left:819px;top:649px" width="8" height="9" viewBox="0 0 8 9"><path d="M1.5 1L6 4.5 1.5 8" fill="none" stroke="#505050" stroke-width="2"/></svg>

<!-- tabs -->
<div class="a" style="left:195px;top:663px;width:654px;height:20px;background:#f0f0f0"></div>
<div class="a" style="left:265px;top:664px;width:584px;height:1px;background:#6d6d6d"></div>
<svg class="a" style="left:190px;top:660px" width="150" height="24" viewBox="0 0 150 24">
 <path d="M67 4.5H136.5L129 22.5H76.5z" fill="#f0f0f0" stroke="#6d6d6d"/>
 <path d="M3 2V4.5L11.7 22.5H67.5L75 4.5V2z" fill="#fff"/>
 <path d="M3.5 4.5L11.7 22.5H67.5L75.5 4.5" fill="none" stroke="#6d6d6d"/>
</svg>
<div class="t" style="left:205px;top:664px">Extended</div>
<div class="t" style="left:269px;top:664px">Standard</div>

<!-- actions pane -->
<div id="actions" class="a"></div>
<div id="acttitle" class="a"></div>
<div class="t tr" style="left:860px;top:86px;font-weight:bold">Actions</div>
<div class="agrad" style="top:106px"></div>
<div class="t tr" style="left:862px;top:110px">Services</div>
<svg class="a" style="left:965px;top:116px" width="10" height="5" viewBox="0 0 10 5"><path d="M0 5L5 0 10 5z" fill="#000"/></svg>
<div class="t tr" style="left:886px;top:134px">More Actions</div>
<svg class="a" style="left:969px;top:138px" width="5" height="9" viewBox="0 0 5 9"><path d="M0 0L5 4.5 0 9z" fill="#000"/></svg>
<div class="agrad" style="top:160px"></div>
<div class="t tr" style="left:862px;top:164px">VSA X Server Up...</div>
<svg class="a" style="left:965px;top:170px" width="10" height="5" viewBox="0 0 10 5"><path d="M0 5L5 0 10 5z" fill="#000"/></svg>
<div class="t tr" style="left:886px;top:188px">More Actions</div>
<svg class="a" style="left:969px;top:192px" width="5" height="9" viewBox="0 0 5 9"><path d="M0 0L5 4.5 0 9z" fill="#000"/></svg>

<!-- status -->
<div id="status" class="a"></div>
<div class="a" style="left:763px;top:686px;width:1px;height:18px;background:#d5d5d5"></div>
<div class="a" style="left:896px;top:686px;width:1px;height:18px;background:#d5d5d5"></div>
<div class="a" style="left:981px;top:686px;width:1px;height:18px;background:#d5d5d5"></div>
<div class="t tr" style="left:2px;top:687px">Start service VSA X Server Update on Local Computer</div>

<!-- context menu -->
<div id="menu" class="a"></div>
<div id="mhl" class="a"></div>
<div class="t" style="left:765px;top:324px">Start</div>
<div class="t dis" style="left:765px;top:346px">Stop</div>
<div class="t dis" style="left:765px;top:368px">Pause</div>
<div class="t dis" style="left:765px;top:390px">Resume</div>
<div class="t dis" style="left:765px;top:412px">Restart</div>
<div class="msep" style="top:436px"></div>
<div class="t" style="left:765px;top:442px">All Tasks</div>
<svg class="a" style="left:861px;top:447px" width="6" height="9" viewBox="0 0 6 9"><path d="M1 0.5L5 4.5 1 8.5" fill="none" stroke="#333" stroke-width="1"/></svg>
<div class="msep" style="top:465px"></div>
<div class="t" style="left:765px;top:471px">Refresh</div>
<div class="msep" style="top:494px"></div>
<div class="t" style="left:765px;top:500px;font-weight:bold">Properties</div>
<div class="msep" style="top:523px"></div>
<div class="t" style="left:765px;top:529px">Help</div>

<!-- cursor -->
<svg class="a" style="left:850px;top:335px" width="13" height="20" viewBox="0 0 13 20"><path d="M0.5 0.5V16.5L4.5 12.5 7.5 19 10 18 7 11.5H12.5z" fill="#fff" stroke="#000" stroke-width="1"/></svg>

</body></html>
